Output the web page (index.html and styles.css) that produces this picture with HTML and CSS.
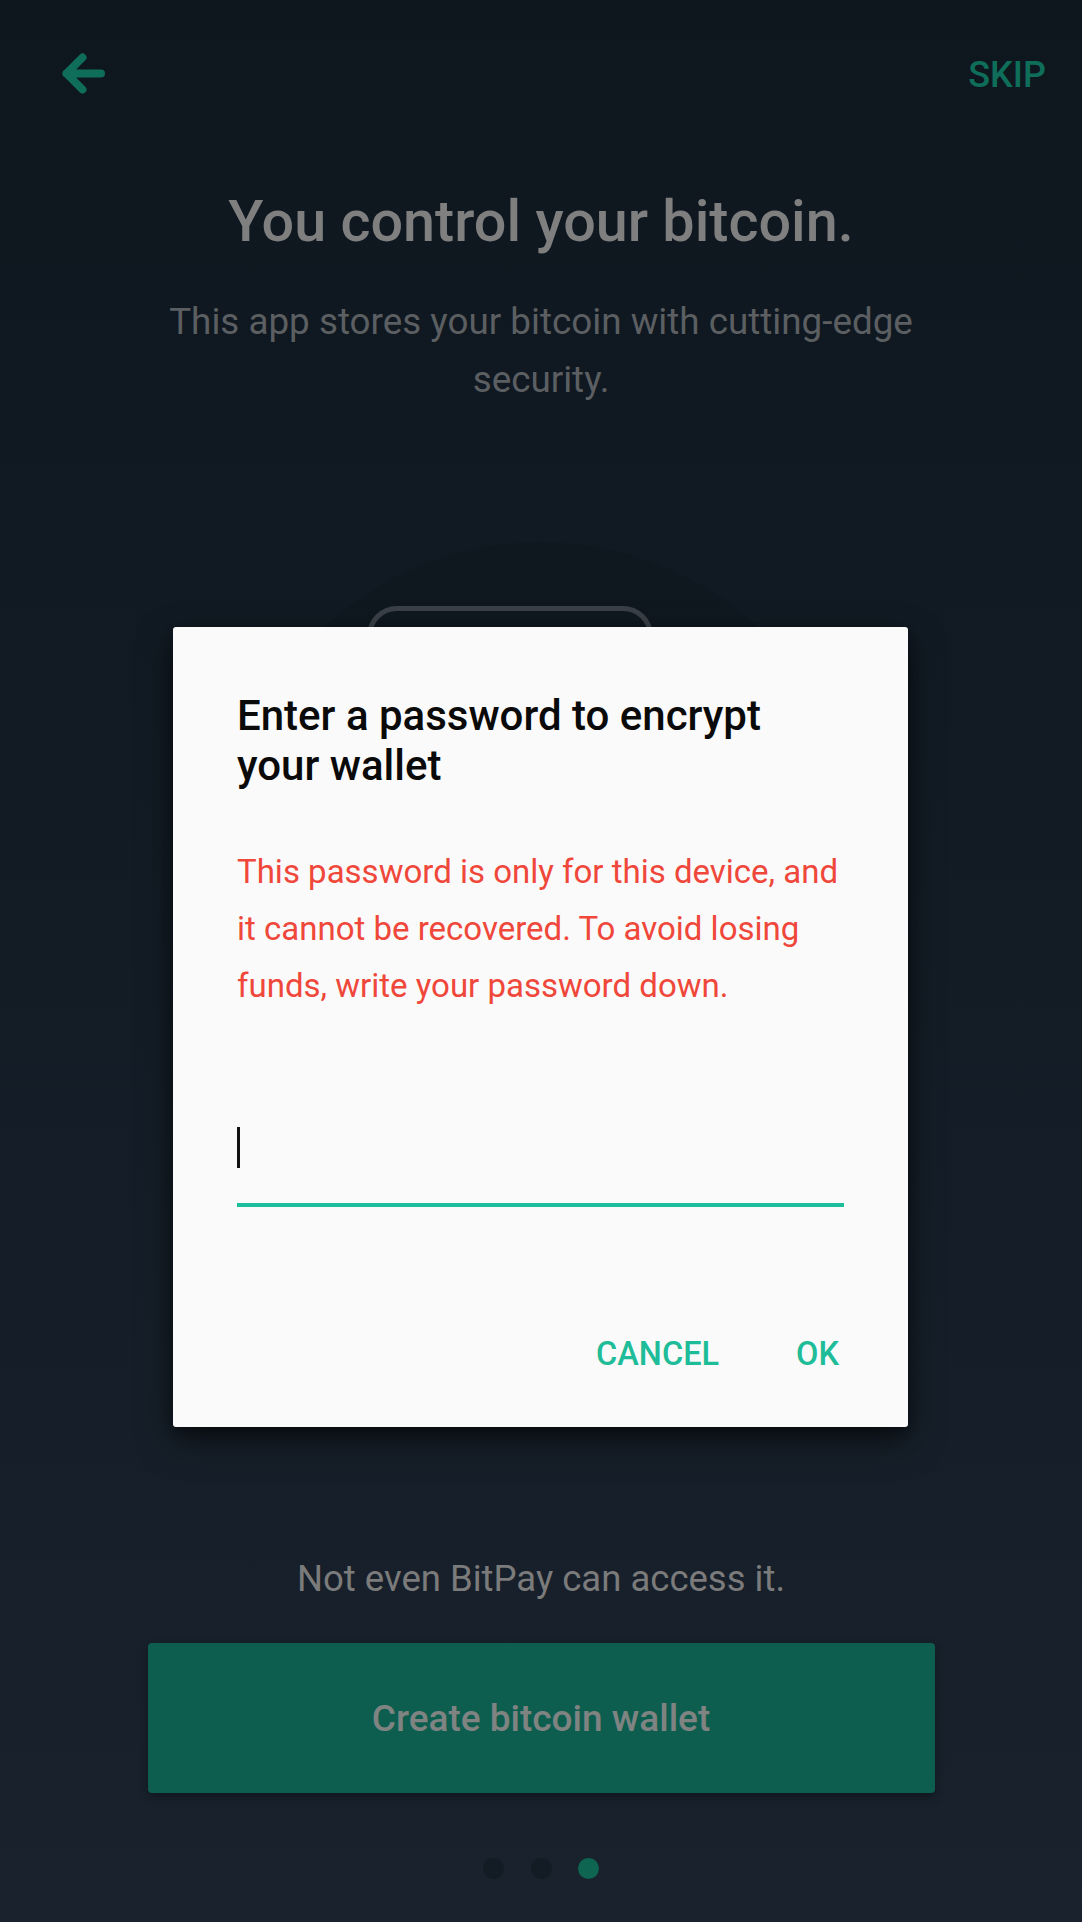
FILE: index.html
```html
<!DOCTYPE html>
<html lang="en">
<head>
<meta charset="utf-8">
<title>You control your bitcoin</title>
<link rel="stylesheet" href="styles.css">
</head>
<body>
<div class="screen">
  <header class="topbar">
    <svg class="back" width="45" height="41" viewBox="0 0 45 41" aria-label="Back">
      <path d="M40 20.5 H5.5 M21.5 4.5 L5.5 20.5 L21.5 36.5" fill="none" stroke="#0f6e5a" stroke-width="8" stroke-linecap="round" stroke-linejoin="round"/>
    </svg>
    <span class="skip">SKIP</span>
  </header>

  <h1 class="title">You control your bitcoin.</h1>
  <p class="subtitle">This app stores your bitcoin with cutting-edge security.</p>

  <div class="hero">
    <div class="glow"></div>
    <div class="phone"></div>
  </div>

  <p class="note">Not even BitPay can access it.</p>
  <button class="create">Create bitcoin wallet</button>

  <div class="dots">
    <span class="dot"></span>
    <span class="dot"></span>
    <span class="dot active"></span>
  </div>

  <div class="dialog" role="dialog">
    <h2 class="dialog-title">Enter a password to encrypt your wallet</h2>
    <p class="dialog-warning">This password is only for this device, and it cannot be recovered. To avoid losing funds, write your password down.</p>
    <div class="field">
      <span class="cursor"></span>
      <div class="field-line"></div>
    </div>
    <div class="actions">
      <span class="action">CANCEL</span>
      <span class="action">OK</span>
    </div>
  </div>
</div>
</body>
</html>
```

FILE: styles.css
```css
html, body {
  margin: 0;
  padding: 0;
  width: 1082px;
  height: 1922px;
  overflow: hidden;
}

body {
  font-family: Roboto, "Noto Sans", "Liberation Sans", sans-serif;
  background: linear-gradient(180deg, #0e161e 0%, #121b24 40%, #19222d 100%);
}

.screen {
  position: relative;
  width: 1082px;
  height: 1922px;
  display: flex;
  flex-direction: column;
  align-items: center;
}

.topbar {
  width: 100%;
  box-sizing: border-box;
  display: flex;
  justify-content: space-between;
  align-items: flex-start;
  padding: 53px 36px 0 61px;
  height: 94px;
}

.back {
  display: block;
}

.skip {
  margin-top: 2px;
  font-size: 36px;
  line-height: 40px;
  font-weight: 500;
  color: #0f6e5a;
}

.title {
  margin: 95px 0 0;
  font-size: 57.5px;
  line-height: 66px;
  font-weight: 500;
  color: #7f7f7f;
  text-align: center;
}

.subtitle {
  margin: 38px 0 0;
  width: 800px;
  font-size: 36.8px;
  line-height: 58px;
  font-weight: 400;
  color: #5c5f62;
  text-align: center;
}

.hero {
  position: relative;
  width: 100%;
  height: 1148px;
  box-sizing: border-box;
  padding-top: 133px;
  display: flex;
  justify-content: center;
}

.glow {
  width: 640px;
  height: 640px;
  border-radius: 50%;
  background: rgba(0, 0, 0, 0.07);
}

.phone {
  position: absolute;
  top: 197px;
  left: 367px;
  width: 286px;
  height: 560px;
  box-sizing: border-box;
  border: 5px solid #3a4047;
  border-radius: 30px;
}

.note {
  margin: 0;
  font-size: 36.5px;
  line-height: 44px;
  color: #7b7b7b;
  text-align: center;
}

.create {
  margin-top: 42px;
  width: 787px;
  height: 150px;
  border: none;
  border-radius: 4px;
  background: #0e5e50;
  box-shadow: 0 4px 10px rgba(0, 0, 0, 0.35);
  font-family: inherit;
  font-size: 37px;
  font-weight: 500;
  color: #7f8482;
  padding: 0;
}

.dots {
  margin-top: 65px;
  display: flex;
  gap: 26.5px;
}

.dot {
  width: 21px;
  height: 21px;
  border-radius: 50%;
  background: #131c25;
}

.dot.active {
  background: #0e6652;
}

.dialog {
  position: absolute;
  left: 173px;
  top: 627px;
  width: 735px;
  box-sizing: border-box;
  padding: 64px 64px 53px;
  background: #fafafa;
  border-radius: 3px;
  box-shadow: 0 14px 34px rgba(0, 0, 0, 0.55), 0 4px 10px rgba(0, 0, 0, 0.3);
}

.dialog-title {
  margin: 0;
  font-size: 42px;
  line-height: 50px;
  font-weight: 500;
  color: #0a0a0a;
}

.dialog-warning {
  margin: 52px 0 0;
  font-size: 33px;
  line-height: 57px;
  color: #f0473b;
}

.field {
  padding-top: 113px;
}

.cursor {
  display: block;
  width: 3px;
  height: 41px;
  background: #111;
}

.field-line {
  margin-top: 35px;
  height: 4px;
  background: #1dbe9c;
}

.actions {
  margin-top: 127px;
  display: flex;
  justify-content: flex-end;
  gap: 77px;
  padding-right: 5px;
}

.action {
  font-size: 32.5px;
  line-height: 40px;
  font-weight: 500;
  color: #1ebc98;
}
```
